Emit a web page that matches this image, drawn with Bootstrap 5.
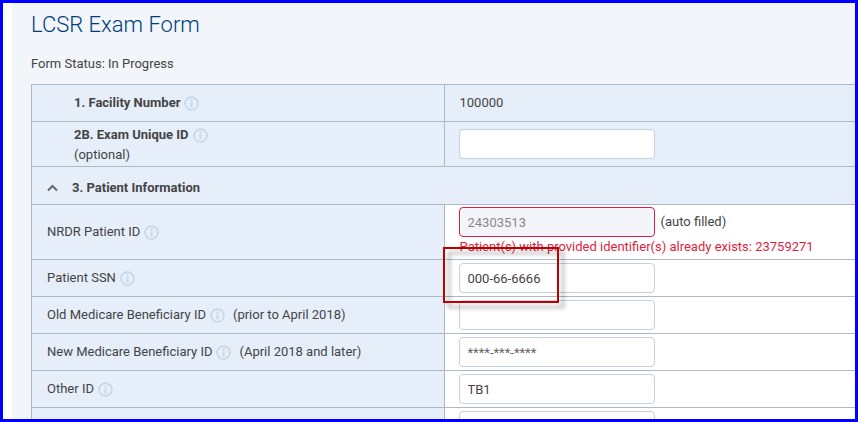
<!DOCTYPE html>
<html lang="en">
<head>
<meta charset="utf-8">
<meta name="viewport" content="width=device-width, initial-scale=1">
<title>LCSR Exam Form</title>
<link rel="stylesheet" href="https://cdn.jsdelivr.net/npm/bootstrap@5.3.0/dist/css/bootstrap.min.css">
<style>
  body { font-family: Roboto, "Liberation Sans", sans-serif; font-size: 13px; line-height: 20px; color: #444; }
  .frame { border: 3px solid #00f; padding-left: 9px; }
  .panel { background: #f2f5fa; padding: 6px 0 0 19px; }
  .page-title { font-size: 22px; line-height: 32px; font-weight: 300; color: #003f7d; margin-bottom: 13px; }
  .status { margin-bottom: 10px; }
  .exam-form { border: 1px solid #a9bac9; border-width: 1px 0 0 1px; }
  .field-row { border-bottom: 1px solid #a9bac9; min-height: 37px; background: #e6eefa; }
  .field-row.tall { min-height: 45px; }
  .field-row.with-error { min-height: 55px; }
  .field-row.section { min-height: 38px; padding: 4px 0 0 15px; }
  .label-cell { padding-left: 15px; }
  .label-cell.indent { padding-left: 42px; }
  .label-cell.two-line { padding-top: 2px; }
  .value-cell { border-left: 1px solid #a9bac9; padding-left: 14px; }
  .value-cell.editable { background: #fff; }
  .value-text { padding-left: 1px; }
  .field-input { width: 196px; height: 30px; padding: 4px 8px; font-size: 13px; line-height: 20px; color: #444; border-color: #c5d1de; border-radius: 4px; }
  .field-input::placeholder { color: #666; opacity: 1; }
  .field-input.rejected, .field-input.rejected:disabled { border-color: #dc1f42; background: #f3f5fa; color: #888; }
  .error-text { color: #dc1f42; line-height: 20px; }
  .icon-btn { border: 0; padding: 0; background: none; line-height: 0; color: #c8d7e4; }
  .info { margin-left: 4px; }
  .chevron { color: #666; margin-right: 14px; }
  .hint { margin-left: 8px; }
  .auto-note { margin-left: 6px; }
  .callout { position: absolute; top: -16px; left: -16px; width: 116px; height: 56px; border: 2px solid #c00000; filter: drop-shadow(5px 5px 2px rgba(0,0,0,.35)); pointer-events: none; z-index: 2; }
</style>
</head>
<body>
<svg class="d-none" aria-hidden="true">
  <symbol id="info" viewBox="0 0 15 15">
    <circle cx="7.5" cy="7.5" r="6.4" fill="none" stroke="currentColor" stroke-width="1.7"/>
    <path d="M6.5 3.6h2v1.8h-2zM6.5 6.4h2v5h-2z" fill="currentColor"/>
  </symbol>
</svg>
<div class="frame vh-100 overflow-hidden d-flex">
  <main class="panel flex-grow-1">
    <h1 class="page-title">LCSR Exam Form</h1>
    <p class="status">Form Status: In Progress</p>
    <form class="exam-form">
      <div class="row g-0 field-row">
        <div class="col-6 label-cell indent d-flex align-items-center"><span class="fw-bold">1. Facility Number</span><button type="button" class="icon-btn info" aria-label="About facility number"><svg width="15" height="15"><use href="#info"/></svg></button></div>
        <div class="col-6 value-cell d-flex align-items-center"><span class="value-text">100000</span></div>
      </div>
      <div class="row g-0 field-row tall">
        <div class="col-6 label-cell indent two-line d-flex flex-column justify-content-center">
          <div class="d-flex align-items-center"><label class="fw-bold" for="exam-id">2B. Exam Unique ID</label><button type="button" class="icon-btn info" aria-label="About exam unique ID"><svg width="15" height="15"><use href="#info"/></svg></button></div>
          <div>(optional)</div>
        </div>
        <div class="col-6 value-cell d-flex align-items-center"><input id="exam-id" type="text" class="form-control field-input"></div>
      </div>
      <div class="field-row section d-flex align-items-center">
        <button type="button" class="icon-btn chevron" aria-label="Collapse section"><svg width="11" height="8" viewBox="0 0 11 8"><path d="M1 6.5 5.5 2 10 6.5" fill="none" stroke="currentColor" stroke-width="2"/></svg></button>
        <span class="fw-bold">3. Patient Information</span>
      </div>
      <div class="row g-0 field-row with-error">
        <div class="col-6 label-cell d-flex align-items-center"><label for="nrdr-id">NRDR Patient ID</label><button type="button" class="icon-btn info" aria-label="About NRDR patient ID"><svg width="15" height="15"><use href="#info"/></svg></button></div>
        <div class="col-6 value-cell editable d-flex flex-column justify-content-center">
          <div class="d-flex align-items-center"><input id="nrdr-id" type="text" class="form-control field-input rejected" value="24303513" disabled><span class="auto-note">(auto filled)</span></div>
          <div class="error-text value-text">Patient(s) with provided identifier(s) already exists: 23759271</div>
        </div>
      </div>
      <div class="row g-0 field-row">
        <div class="col-6 label-cell d-flex align-items-center"><label for="ssn">Patient SSN</label><button type="button" class="icon-btn info" aria-label="About patient SSN"><svg width="15" height="15"><use href="#info"/></svg></button></div>
        <div class="col-6 value-cell editable d-flex align-items-center"><div class="position-relative"><input id="ssn" type="text" class="form-control field-input" value="000-66-6666"><div class="callout"></div></div></div>
      </div>
      <div class="row g-0 field-row">
        <div class="col-6 label-cell d-flex align-items-center"><label for="old-medicare">Old Medicare Beneficiary ID</label><button type="button" class="icon-btn info" aria-label="About old Medicare beneficiary ID"><svg width="15" height="15"><use href="#info"/></svg></button><span class="hint">(prior to April 2018)</span></div>
        <div class="col-6 value-cell editable d-flex align-items-center"><input id="old-medicare" type="text" class="form-control field-input"></div>
      </div>
      <div class="row g-0 field-row">
        <div class="col-6 label-cell d-flex align-items-center"><label for="new-medicare">New Medicare Beneficiary ID</label><button type="button" class="icon-btn info" aria-label="About new Medicare beneficiary ID"><svg width="15" height="15"><use href="#info"/></svg></button><span class="hint">(April 2018 and later)</span></div>
        <div class="col-6 value-cell editable d-flex align-items-center"><input id="new-medicare" type="text" class="form-control field-input" placeholder="****-***-****"></div>
      </div>
      <div class="row g-0 field-row">
        <div class="col-6 label-cell d-flex align-items-center"><label for="other-id">Other ID</label><button type="button" class="icon-btn info" aria-label="About other ID"><svg width="15" height="15"><use href="#info"/></svg></button></div>
        <div class="col-6 value-cell editable d-flex align-items-center"><input id="other-id" type="text" class="form-control field-input" value="TB1"></div>
      </div>
      <div class="row g-0 field-row">
        <div class="col-6 label-cell"></div>
        <div class="col-6 value-cell editable d-flex align-items-center"><input type="text" class="form-control field-input" aria-label="Next field"></div>
      </div>
    </form>
  </main>
</div>
<script src="https://cdn.jsdelivr.net/npm/bootstrap@5.3.0/dist/js/bootstrap.bundle.min.js"></script>
</body>
</html>
